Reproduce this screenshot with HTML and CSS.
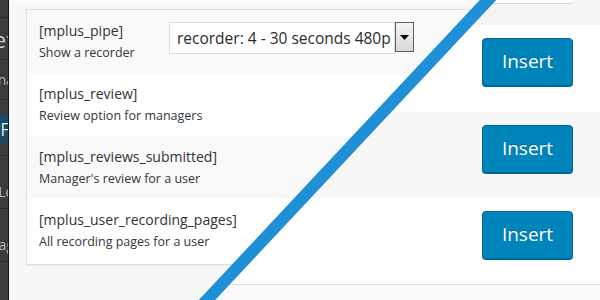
FILE: index.html
```html
<!DOCTYPE html>
<html lang="en">
<head>
  <meta charset="UTF-8">
  <meta name="viewport" content="width=device-width, initial-scale=1.0">
  <title>Shortcodes</title>
  <link rel="stylesheet" href="styles.css">
</head>
<body>
  <div class="screen">
    <!-- admin sidebar, mostly cut off -->
    <aside class="admin-menu">
      <div class="menu-item gap"></div>
      <div class="menu-item big"><span>Set</span></div>
      <div class="menu-item"><span>Ana</span></div>
      <div class="menu-item current"><span>Fi</span></div>
      <div class="menu-item spacer"></div>
      <div class="menu-item tall"><span>Lo</span></div>
      <div class="menu-item tall"><span>Pag</span></div>
      <div class="menu-item fill"></div>
    </aside>

    <main class="page">
      <div class="shortcodes">
        <div class="row alt">
          <div class="info">
            <div class="code">[mplus_pipe]</div>
            <div class="desc">Show a recorder</div>
          </div>
          <div class="select">
            <span class="select-text">recorder: 4 - 30 seconds 480p</span>
            <span class="select-arrow">
              <svg width="9" height="5" viewBox="0 0 9 5"><path d="M0 0h9L4.5 5z" fill="#000"/></svg>
            </span>
          </div>
        </div>
        <div class="row">
          <div class="info">
            <div class="code">[mplus_review]</div>
            <div class="desc">Review option for managers</div>
          </div>
        </div>
        <div class="row alt">
          <div class="info">
            <div class="code">[mplus_reviews_submitted]</div>
            <div class="desc">Manager's review for a user</div>
          </div>
        </div>
        <div class="row last">
          <div class="info">
            <div class="code">[mplus_user_recording_pages]</div>
            <div class="desc">All recording pages for a user</div>
          </div>
        </div>
      </div>
    </main>

    <!-- second screenshot, shown right of the diagonal -->
    <div class="insert-pane">
      <div class="pane-top"><div class="pane-input"></div></div>
      <div class="pane-row"><button class="insert">Insert</button></div>
      <div class="pane-row alt"><button class="insert">Insert</button></div>
      <div class="pane-row"><button class="insert">Insert</button></div>
    </div>

    <svg class="divider" width="600" height="300" viewBox="0 0 600 300">
      <line x1="497.4" y1="-10" x2="197.6" y2="310" stroke="#1f8fd6" stroke-width="12"/>
    </svg>
  </div>
</body>
</html>
```

FILE: styles.css
```css
* {
  box-sizing: border-box;
}

body {
  margin: 0;
  font-family: 'Open Sans', 'Liberation Sans', sans-serif;
  color: #32373c;
  background: #f4f4f4;
}

.screen {
  position: relative;
  width: 600px;
  height: 300px;
  overflow: hidden;
  display: flex;
}

/* Sidebar strip */
.admin-menu {
  width: 9px;
  flex-shrink: 0;
  background: #3b3b3b;
  border-right: 1px solid #141414;
  display: flex;
  flex-direction: column;
  overflow: hidden;
}

.menu-item {
  display: flex;
  justify-content: flex-end;
  align-items: center;
  flex-shrink: 0;
  height: 40px;
  border-bottom: 1px solid #2a2a2a;
  color: #b8b8b8;
  font-size: 14px;
  white-space: nowrap;
}

.menu-item span {
  margin-right: -6px;
}

.menu-item.gap {
  height: 18px;
}

.menu-item.big {
  height: 42px;
  font-size: 22px;
  color: #cfcfcf;
}

.menu-item.current {
  height: 29px;
  background: #1c4a63;
  color: #d6e6ee;
  margin-top: 14px;
  font-size: 18px;
  border-bottom: none;
}

.menu-item.spacer {
  height: 13px;
}

.menu-item.tall {
  height: 53px;
  align-items: flex-end;
  padding-bottom: 7px;
}

.menu-item.fill {
  flex: 1;
  border-bottom: none;
}

/* Left screenshot */
.page {
  flex: 1;
  padding: 5px 0 0 17px;
  background: #f7f7f7;
  border-top: 4px solid #fbfbfb;
}

.shortcodes {
  width: 620px;
  background: #fff;
  border: 1px solid #e1e1e1;
  box-shadow: 0 1px 1px rgba(0, 0, 0, 0.04);
}

.row {
  display: flex;
  align-items: flex-start;
  height: 63px;
  padding: 11px 12px 0;
}

.row.alt {
  background: #f9f9f9;
}

.row.last {
  height: 65px;
}

.info {
  width: 130px;
  flex-shrink: 0;
}

.code {
  font-size: 14px;
  line-height: 20px;
  white-space: nowrap;
  color: #2f3338;
}

.desc {
  margin-top: 3px;
  font-size: 12.5px;
  line-height: 18px;
  white-space: nowrap;
}

.select {
  display: flex;
  margin-top: 1px;
  height: 32px;
}

.select-text {
  width: 226px;
  padding-left: 7px;
  background: #fff;
  border: 1px solid #dcdcdc;
  font-size: 15.5px;
  line-height: 30px;
  color: #2b2b2b;
  white-space: nowrap;
}

.select-arrow {
  width: 19px;
  height: 30px;
  display: flex;
  align-items: center;
  justify-content: center;
  background: linear-gradient(#f4f4f4, #d9d9d9);
  border: 1px solid #5f5f5f;
}

/* Right screenshot */
.insert-pane {
  position: absolute;
  inset: 0;
  background: #f9f9f9;
  clip-path: polygon(488px 0, 600px 0, 600px 300px, 207px 300px);
  display: flex;
  flex-direction: column;
}

.pane-top {
  height: 25px;
  background: #f4f4f4;
}

.pane-input {
  width: 572px;
  height: 4px;
  background: #fff;
  border-bottom: 1px solid #d8d8d8;
}

.pane-row {
  height: 87px;
  padding: 13px 27px 0 0;
  display: flex;
  justify-content: flex-end;
  align-items: flex-start;
  background: #fff;
}

.pane-row.alt {
  height: 86px;
  background: #f7f7f7;
}

.pane-row:last-child {
  border-bottom: 1px solid #dedede;
}

.insert {
  width: 91px;
  height: 48px;
  padding: 0 0 2px;
  background: #0085ba;
  border: 1px solid #006799;
  border-radius: 4px;
  box-shadow: 0 1px 0 #006799;
  color: #fff;
  font-family: 'Open Sans', 'Liberation Sans', sans-serif;
  font-size: 19px;
  text-shadow: 0 -1px 1px #006799;
}

.divider {
  position: absolute;
  top: 0;
  left: 0;
}
```
